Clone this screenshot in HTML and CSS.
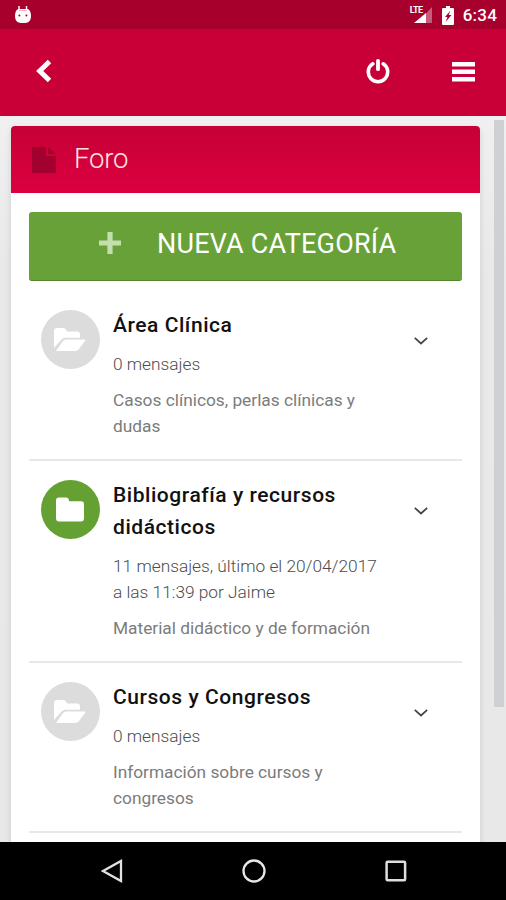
FILE: index.html
```html
<!DOCTYPE html>
<html lang="es">
<head>
<meta charset="utf-8">
<title>Foro</title>
<link rel="stylesheet" href="styles.css">
</head>
<body>
<div class="status">
  <svg class="bot" width="18" height="20" viewBox="0 0 18 20"><path d="M5 1v4M12.500 1v4" stroke="#fff" stroke-width="1.4"/><path d="M4 4h10q3 2 3 7 0 7-6 7H7q-6 0-6-7 0-5 3-7z" fill="#fff"/><path d="M5 5.5h8" stroke="#e8a0b0" stroke-width=".8"/><circle cx="5.4" cy="10.5" r="1" fill="#a8002d"/><circle cx="12.4" cy="10.5" r="1" fill="#a8002d"/></svg>
  <div class="signal"><svg width="24" height="20" viewBox="0 0 24 20"><path d="M17 8.5 23 2v16h-6z" fill="#c65c7b"/><path d="M17 8v10H5z" fill="#fff"/></svg><span class="lte">LTE</span></div>
  <svg class="battery" width="12" height="19" viewBox="0 0 12 19"><path d="M4 0h4v2h3q1 0 1 1v15q0 1-1 1H1q-1 0-1-1V3q0-1 1-1h3z" fill="#fff"/><path d="M8.5 4.5 3 11h2.5l-2 5L9.5 9H6.6z" fill="#a8002d"/></svg>
  <span class="clock">6:34</span>
</div>
<header class="bar">
  <svg class="back" width="16" height="24" viewBox="0 0 16 24"><path d="M13.5 2.5 3.7 12l9.8 9.5" fill="none" stroke="#fff" stroke-width="5"/></svg>
  <svg class="power" width="24" height="26" viewBox="0 0 24 26"><path d="M6.8 5.8a9.7 9.7 0 1 0 10.4 0" fill="none" stroke="#fff" stroke-width="3.6" stroke-linecap="round"/><path d="M12 2.8v8.4" stroke="#fff" stroke-width="3.8" stroke-linecap="round"/></svg>
  <svg class="menu" width="23" height="20" viewBox="0 0 23 20"><path d="M0 2.3h23M0 9.8h23M0 17.3h23" stroke="#fff" stroke-width="4.4"/></svg>
</header>
<main class="page">
  <section class="card">
    <h1 class="card-head"><svg width="24" height="26" viewBox="0 0 24 26"><path d="M0 0h14v9h10v17H0z" fill="#a2002f"/><path d="M16 0l7.5 7H16z" fill="#a2002f"/></svg><span>Foro</span></h1>
    <div class="card-body">
      <button class="new"><svg width="22" height="22" viewBox="0 0 22 22"><path d="M11 0v22M0 11h22" stroke="#c4dfae" stroke-width="5.2"/></svg><span>NUEVA CATEGORÍA</span></button>
      <ul class="list">
        <li class="item">
          <span class="disc"><svg width="32" height="26" viewBox="0 0 32 26"><path d="M0 21V4q0-3 3-3h6q3 0 4 3.500h10q3 0 3 3V10.800H11q-2 0-3.200 1.500z" fill="#fff"/><path d="M2 24 9 14q1-1.500 3-1.500h19q.8.500 0 1.500l-6 8q-1.500 2-3.500 2z" fill="#fff"/></svg></span>
          <div class="text"><h2>Área Clínica</h2><p class="meta">0 mensajes</p><p class="desc">Casos clínicos, perlas clínicas y dudas</p></div>
          <svg class="chev" width="16" height="10" viewBox="0 0 16 10"><path d="M1.800 1.800 8 7.500l6.200-5.700" fill="none" stroke="#444" stroke-width="1.700"/></svg>
        </li>
        <li class="item">
          <span class="disc on"><svg width="28" height="25" viewBox="0 0 28 25"><path d="M0 3.500Q0 .5 3 .5h7q3 0 3 3.700h12q3 0 3 3V21q0 3.500-3 3.500H3Q0 24.500 0 21z" fill="#fff"/></svg></span>
          <div class="text"><h2>Bibliografía y recursos didácticos</h2><p class="meta">11 mensajes, último el 20/04/2017 a las 11:39 por Jaime</p><p class="desc">Material didáctico y de formación</p></div>
          <svg class="chev" width="16" height="10" viewBox="0 0 16 10"><path d="M1.800 1.800 8 7.500l6.200-5.700" fill="none" stroke="#444" stroke-width="1.700"/></svg>
        </li>
        <li class="item">
          <span class="disc"><svg width="32" height="26" viewBox="0 0 32 26"><path d="M0 21V4q0-3 3-3h6q3 0 4 3.500h10q3 0 3 3V10.800H11q-2 0-3.200 1.500z" fill="#fff"/><path d="M2 24 9 14q1-1.500 3-1.500h19q.8.500 0 1.500l-6 8q-1.500 2-3.500 2z" fill="#fff"/></svg></span>
          <div class="text"><h2>Cursos y Congresos</h2><p class="meta">0 mensajes</p><p class="desc">Información sobre cursos y congresos</p></div>
          <svg class="chev" width="16" height="10" viewBox="0 0 16 10"><path d="M1.800 1.800 8 7.500l6.200-5.700" fill="none" stroke="#444" stroke-width="1.700"/></svg>
        </li>
      </ul>
    </div>
  </section>
  <div class="track"><div class="thumb"></div></div>
</main>
<nav class="nav">
  <svg width="24" height="24" viewBox="0 0 24 24"><path d="M21 2v20L3 12z" fill="none" stroke="#e2e2e2" stroke-width="2.300"/></svg>
  <svg width="26" height="26" viewBox="0 0 26 26"><circle cx="13" cy="13" r="10.500" fill="none" stroke="#e8e8e8" stroke-width="2.300"/></svg>
  <svg width="24" height="24" viewBox="0 0 24 24"><rect x="2.600" y="2.800" width="18.500" height="18.500" rx="1" fill="none" stroke="#dedede" stroke-width="2.500"/></svg>
</nav>
</body>
</html>
```

FILE: styles.css
```css
* { box-sizing: border-box; }
body { margin: 0; width: 506px; height: 900px; display: flex; flex-direction: column; overflow: hidden; font-family: Roboto, sans-serif; background: #ececed; }
h1, h2, p, ul { margin: 0; padding: 0; }
svg { display: block; flex: none; }
.status { height: 29px; flex: none; display: flex; align-items: center; padding: 1px 9px 0 14px; background: #a8002d; color: #fff; }
.signal { position: relative; margin-left: auto; margin-right: 9px; }
.lte { position: absolute; left: 1px; top: 1px; font-size: 9px; line-height: 9px; font-weight: 700; letter-spacing: -.6px; }
.battery { margin-right: 9px; }
.clock { font-size: 17px; font-weight: 500; letter-spacing: .2px; line-height: 28px; }
.bar { height: 87px; flex: none; display: flex; align-items: center; padding: 0 31px 4px 36px; background: #c90038; border-top: 1px solid #b80a3b; }
.power { margin-left: auto; margin-right: 62px; }
.menu { margin-top: 1px; }
.page { height: 726px; flex: none; display: flex; align-items: flex-start; overflow: hidden; padding: 10px 0 0 11px; background: linear-gradient(#f0f0f1, #e9e9e9 150px, #e8e8e8); }
.card { width: 469px; height: 740px; flex: none; background: #fff; border-radius: 4px 4px 0 0; box-shadow: 0 3px 6px rgba(0, 0, 0, .12); }
.card-head { height: 67px; display: flex; align-items: center; gap: 18px; padding-left: 21px; background: linear-gradient(#c60036, #dc0040); border-radius: 4px 4px 0 0; color: #ffe2e4; font-size: 27.500px; font-weight: 300; letter-spacing: -.2px; }
.card-head span { margin-bottom: 2px; }
.card-body { padding: 19px 18px 0; }
.new { width: 433px; height: 69px; display: flex; align-items: center; padding: 0 0 6px 70px; gap: 36px; border: 0; border-radius: 3px; background: #68a138; border-bottom: 1px solid #538428; color: #fff; font: 400 27px Roboto, sans-serif; letter-spacing: .2px; white-space: nowrap; }
.new span { margin-top: 2px; }
.list { list-style: none; padding-top: 10px; }
.item { display: flex; align-items: flex-start; padding: 18px 33px 20px 12px; border-bottom: 2px solid #e8e8e8; }
.disc { width: 59px; height: 59px; flex: none; margin-top: 1px; display: flex; align-items: center; justify-content: center; border-radius: 50%; background: #dcdcdc; }
.disc svg { margin-right: 1px; }
.disc.on { background: #65a033; }
.text { width: 272px; margin-left: 13px; flex: none; }
h2 { font-size: 21px; line-height: 32px; font-weight: 500; letter-spacing: .55px; color: #111; }
.meta, .desc { margin-top: 10px; font-size: 17.300px; line-height: 26px; font-weight: 300; color: #4c4c4c; }
.desc { font-weight: 400; color: #7c7c7c; }
.chev { margin: 27px 0 0 auto; }
.track { width: 12px; height: 722px; margin: -6px 0 0 auto; flex: none; }
.thumb { width: 10px; height: 587px; background: #cfd0d4; }
.nav { height: 58px; flex: none; display: flex; justify-content: space-between; align-items: center; padding: 0 98px 0 100px; background: #000; }
```
